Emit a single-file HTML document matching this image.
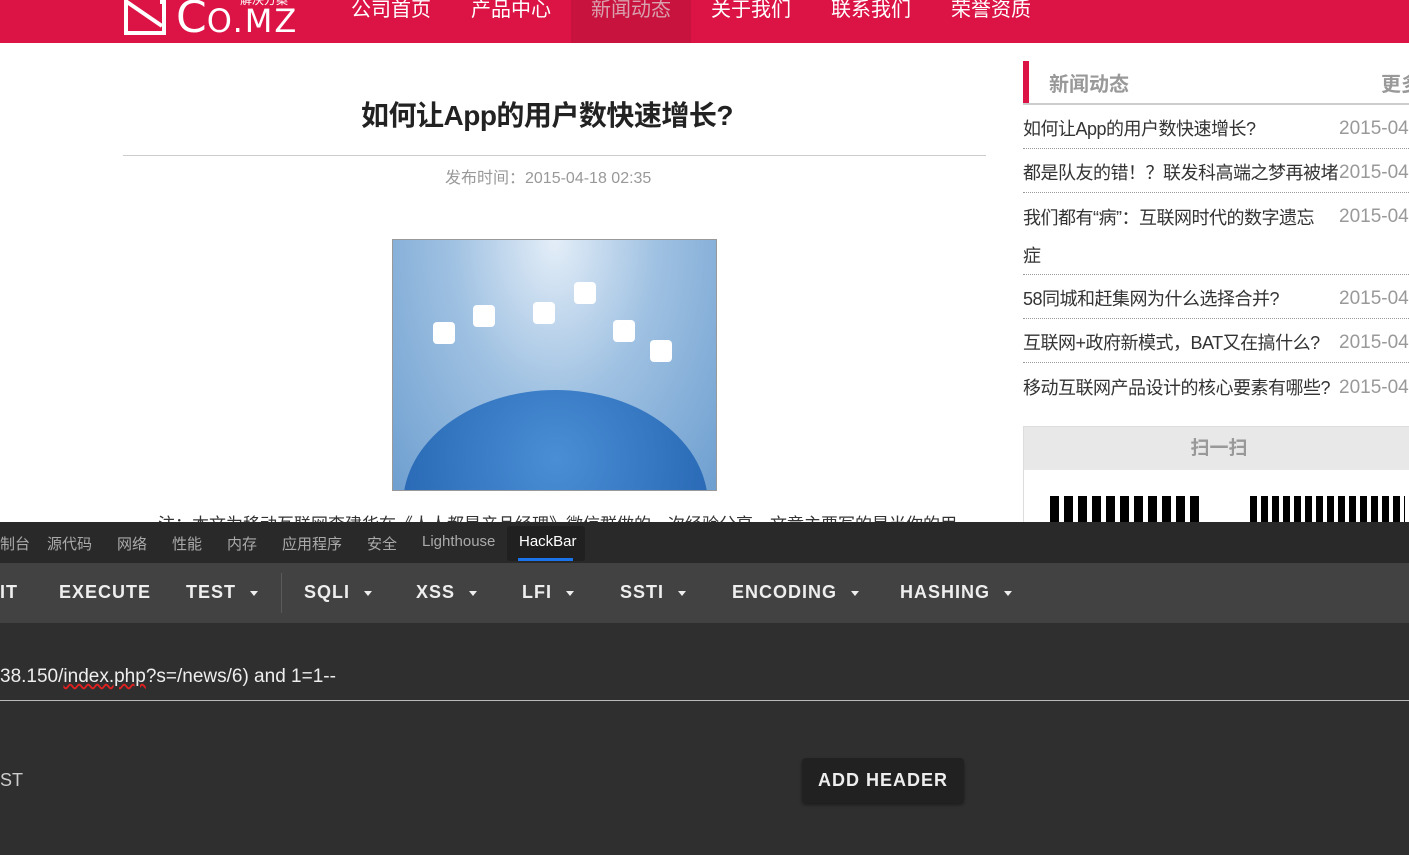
<!DOCTYPE html>
<html><head><meta charset="utf-8"><style>
*{margin:0;padding:0;box-sizing:border-box}
body{width:1409px;height:855px;overflow:hidden;background:#fff;position:relative;font-family:"Liberation Sans","Noto Sans CJK SC",sans-serif}
.a{position:absolute;white-space:nowrap}
.nav{left:0;top:0;width:1409px;height:43px;background:#dc1446}
.ni{top:-2px;height:43px;line-height:24px;color:#fff;font-size:20px}
.li{left:1023px;width:386px;font-size:18px;color:#333;border-bottom:1px dotted #999;letter-spacing:-0.5px}
.li span{position:absolute;left:316px;top:0;color:#999;font-size:19px;letter-spacing:0}
.tab{top:533px;font-size:15px;color:#aaa}
.tb{top:582px;font-size:18px;color:#eee;font-weight:bold;letter-spacing:1px}
.tri{display:inline-block;width:0;height:0;border-left:4px solid transparent;border-right:4px solid transparent;border-top:5px solid #eee;margin-left:14px;vertical-align:middle}
</style></head><body>
<div class="a nav"></div>
<div class="a" style="left:124px;top:0;width:42px;height:35px;border:4px solid #fff;border-top:none"></div>
<svg class="a" style="left:124px;top:0" width="42" height="35"><path d="M3 2 L38 26 M38 0 L38 4" stroke="#fff" stroke-width="4" fill="none"/></svg>
<div class="a" style="left:176px;top:-8px;font-size:44px;color:#fff;font-family:'DejaVu Sans',sans-serif">C<span style="font-size:32px;letter-spacing:2px">O.MZ</span></div>
<div class="a" style="left:240px;top:-9px;font-size:12px;color:#fff">解决方案</div>
<div class="a" style="left:571px;top:0;width:120px;height:43px;background:#c8133e"></div>
<div class="a ni" style="left:351px">公司首页</div>
<div class="a ni" style="left:471px">产品中心</div>
<div class="a ni" style="left:591px;color:#d9a0ad">新闻动态</div>
<div class="a ni" style="left:711px">关于我们</div>
<div class="a ni" style="left:831px">联系我们</div>
<div class="a ni" style="left:951px">荣誉资质</div>

<div class="a" style="left:361px;top:94px;font-size:28px;font-weight:bold;color:#222;letter-spacing:-0.5px">如何让App的用户数快速增长?</div>
<div class="a" style="left:123px;top:155px;width:863px;height:1px;background:#ccc"></div>
<div class="a" style="left:445px;top:164px;font-size:16px;color:#999">发布时间：2015-04-18 02:35</div>
<div class="a" style="left:392px;top:239px;width:325px;height:252px;border:1px solid #999;background:radial-gradient(ellipse at 50% 0%,#e4eef8 0%,#9fc1e2 45%,#6e9fd0 100%);overflow:hidden">
<div class="a" style="left:10px;top:150px;width:305px;height:230px;border-radius:50%;background:radial-gradient(circle at 50% 30%,#4a8fd6,#1c5aa8)"></div>
<div class="a" style="left:181px;top:42px;width:22px;height:22px;background:#fff;border-radius:4px"></div>
<div class="a" style="left:80px;top:65px;width:22px;height:22px;background:#fff;border-radius:4px"></div>
<div class="a" style="left:140px;top:62px;width:22px;height:22px;background:#fff;border-radius:4px"></div>
<div class="a" style="left:257px;top:100px;width:22px;height:22px;background:#fff;border-radius:4px"></div>
<div class="a" style="left:40px;top:82px;width:22px;height:22px;background:#fff;border-radius:4px"></div>
<div class="a" style="left:220px;top:80px;width:22px;height:22px;background:#fff;border-radius:4px"></div>
</div>
<div class="a" style="left:158px;top:510px;font-size:17px;color:#333">注：本文为移动互联网李建华在《人人都是产品经理》微信群做的一次经验分享，文章主要写的是当你的用</div>

<div class="a" style="left:1023px;top:61px;width:6px;height:42px;background:#dc1446"></div>
<div class="a" style="left:1023px;top:103px;width:386px;height:2px;background:#ccc"></div>
<div class="a" style="left:1049px;top:68px;font-size:20px;font-weight:bold;color:#999">新闻动态</div>
<div class="a" style="left:1381px;top:68px;font-size:20px;font-weight:bold;color:#999">更多</div>
<div class="a li" style="top:105px;height:44px;line-height:48px">如何让App的用户数快速增长?<span>2015-04</span></div>
<div class="a li" style="top:149px;height:44px;line-height:48px">都是队友的错！？联发科高端之梦再被堵<span>2015-04</span></div>
<div class="a li" style="top:193px;height:82px;line-height:48px"><div style="line-height:38px;padding-top:6px">我们都有“病”：互联网时代的数字遗忘<br>症</div><span>2015-04</span></div>
<div class="a li" style="top:275px;height:44px;line-height:48px">58同城和赶集网为什么选择合并?<span>2015-04</span></div>
<div class="a li" style="top:319px;height:44px;line-height:48px">互联网+政府新模式，BAT又在搞什么?<span>2015-04</span></div>
<div class="a li" style="top:363px;height:44px;line-height:50px;border:none">移动互联网产品设计的核心要素有哪些?<span>2015-04</span></div>
<div class="a" style="left:1023px;top:426px;width:400px;height:110px;border:1px solid #ddd"></div>
<div class="a" style="left:1024px;top:427px;width:400px;height:43px;background:#e8e8e8;text-align:center;line-height:43px;font-size:19px;font-weight:bold;color:#999;padding-right:10px">扫一扫</div>
<div class="a" style="left:1050px;top:496px;width:152px;height:30px;background:repeating-linear-gradient(90deg,#000 0 9px,#fff 9px 14px)"></div>
<div class="a" style="left:1250px;top:496px;width:155px;height:30px;background:repeating-linear-gradient(90deg,#000 0 7px,#fff 7px 11px)"></div>

<div class="a" style="left:0;top:522px;width:1409px;height:333px;background:#2f2f2f"></div>
<div class="a" style="left:0;top:522px;width:1409px;height:41px;background:#292929"></div>
<div class="a" style="left:507px;top:526px;width:78px;height:35px;background:#202020;border-radius:3px"></div>
<div class="a" style="left:518px;top:558px;width:55px;height:3px;background:#1a73e8"></div>
<div class="a tab" style="left:0">制台</div>
<div class="a tab" style="left:47px">源代码</div>
<div class="a tab" style="left:117px">网络</div>
<div class="a tab" style="left:172px">性能</div>
<div class="a tab" style="left:227px">内存</div>
<div class="a tab" style="left:282px">应用程序</div>
<div class="a tab" style="left:367px">安全</div>
<div class="a tab" style="left:422px">Lighthouse</div>
<div class="a tab" style="left:519px;color:#fff">HackBar</div>
<div class="a" style="left:0;top:563px;width:1409px;height:60px;background:#424242"></div>
<div class="a" style="left:281px;top:573px;width:1px;height:40px;background:#5a5a5a"></div>
<div class="a tb" style="left:0">IT</div>
<div class="a tb" style="left:59px">EXECUTE</div>
<div class="a tb" style="left:186px">TEST<i class="tri"></i></div>
<div class="a tb" style="left:304px">SQLI<i class="tri"></i></div>
<div class="a tb" style="left:416px">XSS<i class="tri"></i></div>
<div class="a tb" style="left:522px">LFI<i class="tri"></i></div>
<div class="a tb" style="left:620px">SSTI<i class="tri"></i></div>
<div class="a tb" style="left:732px">ENCODING<i class="tri"></i></div>
<div class="a tb" style="left:900px">HASHING<i class="tri"></i></div>
<div class="a" style="left:0;top:666px;font-size:19px;color:#eee">38.150/<span style="text-decoration:underline wavy #e02020">index.php</span>?s=/news/6) and 1=1--</div>
<div class="a" style="left:0;top:700px;width:1409px;height:1px;background:#bbb"></div>
<div class="a" style="left:0;top:770px;font-size:18px;color:#ccc">ST</div>
<div class="a" style="left:802px;top:758px;width:162px;height:45px;background:#212121;border-radius:4px;box-shadow:0 2px 3px rgba(0,0,0,.4);color:#eee;font-size:18px;font-weight:bold;letter-spacing:1px;text-align:center;line-height:45px">ADD HEADER</div>
</body></html>
